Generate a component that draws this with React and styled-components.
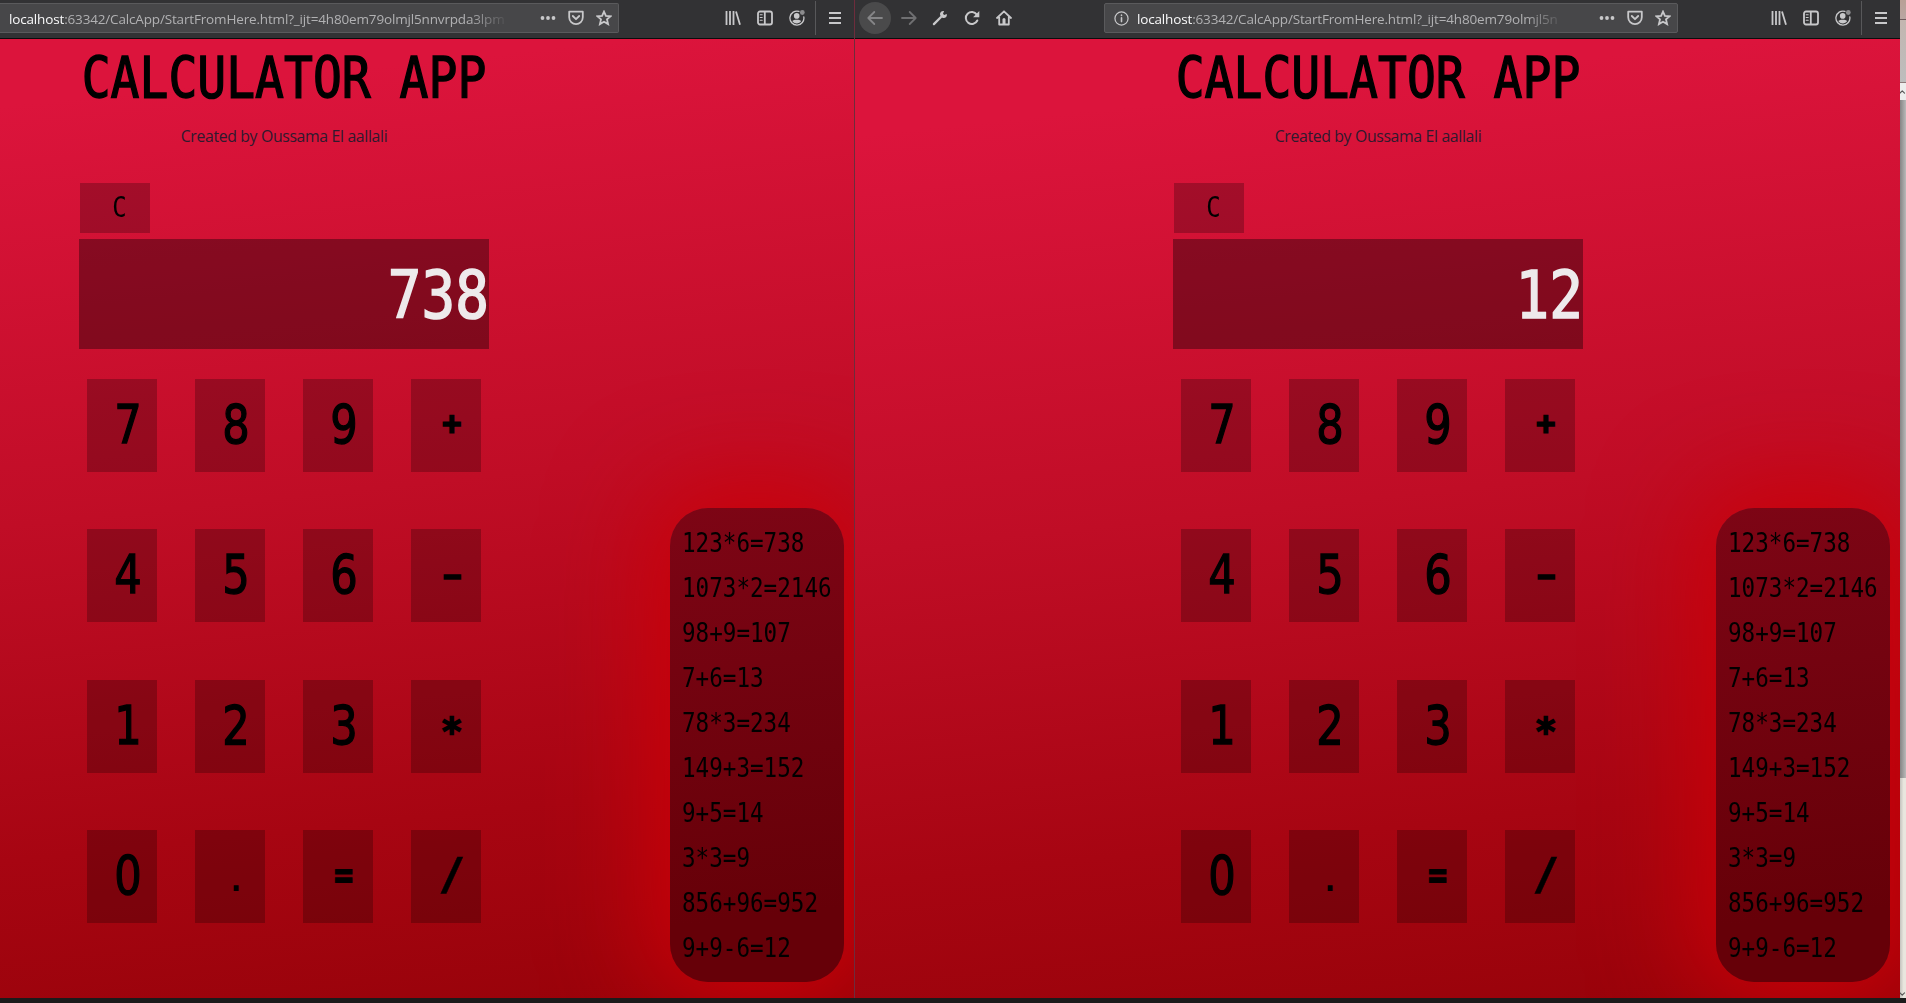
import React from "react";
import styled, { createGlobalStyle, css } from "styled-components";

const GlobalStyle = createGlobalStyle`
  * { box-sizing: border-box; }
  body { margin: 0; overflow: hidden; background: #1b1b1b; }
`;

const LCD = `"DejaVu Sans Mono", "Liberation Mono", monospace`;
const UI = `"Open Sans", "Noto Sans", sans-serif`;

const Desktop = styled.div`
  display: flex;
  width: 1906px;
  height: 1003px;
  padding-bottom: 5px;
  background: #1b1b1b;
  overflow: hidden;
`;

const Window = styled.section`
  display: flex;
  flex-direction: column;
  flex: none;
  width: ${(p) => p.$width}px;
  height: 998px;
  ${(p) => p.$divided && css`border-right: 1px solid #6e2c3c;`}
`;

const Toolbar = styled.header`
  display: flex;
  align-items: center;
  flex: none;
  height: 39px;
  padding-bottom: 2px;
  background: #323234;
  border-bottom: 1px solid #0c0c0d;
`;

const UrlBar = styled.div`
  display: flex;
  align-items: center;
  flex: none;
  width: ${(p) => p.$width}px;
  height: 30px;
  margin-left: ${(p) => p.$offset}px;
  background: #474749;
  border: 1px solid #5a5a5c;
  ${(p) => p.$cut && css`border-left: 0;`}
  border-radius: ${(p) => (p.$cut ? "0 2px 2px 0" : "2px")};
`;

const Url = styled.div`
  flex: none;
  width: ${(p) => p.$width}px;
  margin-left: ${(p) => p.$indent}px;
  padding-top: 1px;
  white-space: nowrap;
  font: 13.5px/22px ${UI};
  letter-spacing: -0.16px;
  color: #b1b1b3;
  mask-image: linear-gradient(to right, #000 calc(100% - 40px), transparent);
`;

const Host = styled.span`
  color: #f9f9fa;
`;

const IconSlot = styled.span`
  display: flex;
  flex: none;
  align-items: center;
  justify-content: center;
  width: ${(p) => p.$width || 28}px;
  height: 32px;
  color: #c8c8ca;
`;

const BackButton = styled(IconSlot)`
  background: #4a4a4b;
  border-radius: 50%;
  color: #858587;
`;

const Spacer = styled.span`
  flex: 1;
`;

const Separator = styled.span`
  width: 1px;
  height: 34px;
  margin: 0 3px 0 2px;
  background: #58585a;
`;

const MenuSlot = styled(IconSlot)`
  width: 35px;
  padding-right: 3px;
`;

const Page = styled.main`
  display: flex;
  justify-content: space-between;
  flex: 1;
  min-height: 0;
  padding-left: ${(p) => p.$indent}px;
  overflow: hidden;
  background-image: linear-gradient(174deg, #dc143c 0%, #dc143c 9%, #c00d26 48%, #a70512 79%, #950208 103%);
  background-size: ${(p) => p.$canvas}px 100%;
  background-position: right top;
`;

const Calculator = styled.div`
  display: flex;
  flex-direction: column;
  width: 410px;
`;

const Stretch = styled.span`
  display: inline-block;
  transform: scaleY(1.18);
`;

const Title = styled.h1`
  margin: 13px 0 0;
  height: 52px;
  text-align: center;
  white-space: nowrap;
  font: 48px/52px ${LCD};
  -webkit-text-stroke: 1.2px #000;
  color: #000;
`;

const Author = styled.p`
  margin: 20px 0 0;
  text-align: center;
  font: 15.8px/24px ${UI};
  letter-spacing: -0.34px;
  color: #2f1a2e;
`;

const Clear = styled.button`
  width: 70px;
  height: 50px;
  margin: 35px 0 0 1px;
  padding: 0 0 0 9px;
  border: 0;
  background: rgba(0, 0, 0, 0.24);
  font: 24px/50px ${LCD};
  color: #000;
`;

const Display = styled.output`
  height: 110px;
  margin-top: 6px;
  background: rgba(0, 0, 0, 0.36);
  text-align: right;
  font: 56px/111px ${LCD};
  -webkit-text-stroke: 1.4px #eeeaec;
  color: #eeeaec;
`;

const Keypad = styled.div`
  display: grid;
  grid-template-columns: repeat(4, 70px);
  grid-auto-rows: 93px;
  gap: 57.33px 38px;
  margin: 30px 0 0 8px;
`;

const Key = styled.button`
  padding: 0 0 2px 12px;
  border: 0;
  background: rgba(0, 0, 0, 0.24);
  font: 47px/91px "DejaVu Sans", sans-serif;
  color: #000;
`;

const KeyFace = styled.span`
  display: inline-block;
  transform: ${(p) => p.$shape};
  -webkit-text-stroke: ${(p) => p.$weight}px #000;
`;

const History = styled.ol`
  align-self: flex-end;
  width: 174px;
  height: 474px;
  margin: 0 10px 16px 0;
  padding: 13px 0 0 12px;
  list-style: none;
  background: linear-gradient(174deg, #7d0515, #660008 85%);
  border-radius: 38px;
  box-shadow: 0 0 100px 20px #cc0008;
`;

const Entry = styled.li`
  height: 45.05px;
  white-space: nowrap;
  font: 22.6px/45px ${LCD};
  color: #000;
`;

const Backdrop = styled.aside`
  display: flex;
  flex-direction: column;
  width: 6px;
  height: 998px;
  background: linear-gradient(to right, #c4c2bd, #e9e6de 60%);
`;

const Artwork = styled.div`
  height: 82px;
  background: linear-gradient(#b9a096, #b9a6a2 23%, #6e5a5c 23%, #6e5a5c 24.5%, #c3b6b0 25%, #bdbdbd);
`;

const ScrollUp = styled.div`
  display: flex;
  align-items: center;
  height: 18px;
  border-top: 1px solid #8d7a7a;
  background: #ededed;
`;

const Thumb = styled.div`
  height: 678px;
  background: linear-gradient(to right, #858585, #b9b9b9);
`;

const ScrollDown = styled.div`
  display: flex;
  align-items: flex-end;
  flex: 1;
`;

const Svg = ({ size = 16, children, ...rest }) => (
  <svg width={size} height={size} viewBox="0 0 16 16" fill="none" stroke="currentColor"
    strokeWidth="1.8" strokeLinecap="round" strokeLinejoin="round" {...rest}>
    {children}
  </svg>
);

const Dots = () => (
  <Svg fill="currentColor" stroke="none">
    <circle cx="2.500" cy="8" r="1.9" /><circle cx="8" cy="8" r="1.9" /><circle cx="13.500" cy="8" r="1.9" />
  </Svg>
);
const Pocket = () => (
  <Svg><path d="M1.2 1.7h13.6v5.6a6.8 6.8 0 0 1-13.6 0z" /><path d="M4.8 6l3.2 3.2L11.2 6" /></Svg>
);
const Star = () => (
  <Svg strokeLinejoin="miter"><path d="M8 1.600l1.900 4.300 4.700.4-3.600 3.100 1.100 4.700L8 11.700l-4.100 2.400 1.100-4.700-3.600-3.100 4.700-.4z" /></Svg>
);
const Library = () => (
  <Svg strokeLinecap="butt"><path d="M1.5 1v14M5 1v14M8.5 1v14M11 1.4l4 13.4" /></Svg>
);
const Sidebar = () => (
  <Svg><rect x="1" y="1.5" width="14" height="13" rx="2" /><path d="M7.8 2v12" /><path d="M3.2 4.7h2M3.2 7.5h2M3.2 10.2h2" strokeWidth="1.1" /></Svg>
);
const Account = () => (
  <Svg>
    <path d="M10 1.4A7 7 0 1 0 14.8 6.8" strokeWidth="1.3" />
    <circle cx="7.7" cy="5.9" r="2.8" fill="currentColor" stroke="none" />
    <path d="M3.3 11c1.5-1.7 7.300-1.700 8.800 0-1.500 3.200-7.300 3.200-8.800 0z" fill="currentColor" stroke="none" />
    <circle cx="13.3" cy="2.500" r="2.400" fill="#8b8b8d" stroke="none" />
  </Svg>
);
const Menu = () => (
  <Svg strokeLinecap="butt" strokeWidth="2"><path d="M2 3h12M2 8h12M2 13h12" /></Svg>
);
const Back = () => <Svg><path d="M15 8H1.500M7.300 2L1.300 8l6 6" /></Svg>;
const Forward = () => <Svg color="#6f6f71"><path d="M1 8h13.500M8.700 2l6 6-6 6" /></Svg>;
const Wrench = () => (
  <Svg>
    <path d="M1.900 14.100L9 7" strokeWidth="2.300" />
    <path d="M14.800 3.900l-2.700 1-1.100-1.100 1.100-2.700C9.400.7 7.500 2.700 8.100 5.300l2.600 2.600c2.600.6 4.600-1.300 4.100-4z" fill="currentColor" stroke="none" />
  </Svg>
);
const Reload = () => (
  <Svg strokeWidth="2"><path d="M13.300 10.500A6 6 0 1 1 12.800 4.600" /><path d="M15.300 1v6.200H9.100z" fill="currentColor" stroke="none" /></Svg>
);
const Home = () => (
  <Svg><path d="M1 8l7-6.700L15 8M3.200 7v7.500h9.600V7" /><path d="M8 14v-3.800" strokeWidth="3" strokeLinecap="butt" /><circle cx="8" cy="9.500" r="1.500" fill="currentColor" stroke="none" /></Svg>
);
const Info = () => (
  <Svg size={15} strokeWidth="1.300"><circle cx="8" cy="8" r="7" /><path d="M8 7.300v4M8 4.400v.4" strokeWidth="1.700" /></Svg>
);

const KEYS = ["7", "8", "9", "+", "4", "5", "6", "-", "1", "2", "3", "*", "0", ".", "=", "/"];
const DIGIT = { shape: "scale(0.92, 1.15)", weight: 1.2 };
const SHAPES = {
  "+": { shape: "translateY(-1px) scale(0.52)", weight: 6 },
  "-": { shape: "translateY(-2px) scale(1.3, 1.1)", weight: 1.2 },
  "*": { shape: "translateY(6px) scale(0.8)", weight: 3 },
  "=": { shape: "translateY(-1px) scale(0.55, 0.9)", weight: 2.4 },
  "/": { shape: "translateY(-1px) scale(1.4, 0.96)", weight: 0.3 },
  ".": { shape: "translateY(-1px)", weight: 0 },
};
const HISTORY = [
  "123*6=738", "1073*2=2146", "98+9=107", "7+6=13", "78*3=234",
  "149+3=152", "9+5=14", "3*3=9", "856+96=952", "9+9-6=12",
];

const PageActions = () => (
  <>
    <IconSlot><Dots /></IconSlot>
    <IconSlot><Pocket /></IconSlot>
    <IconSlot><Star /></IconSlot>
  </>
);

const BrowserActions = () => (
  <>
    <IconSlot $width={32}><Library /></IconSlot>
    <IconSlot $width={32}><Sidebar /></IconSlot>
    <IconSlot $width={32}><Account /></IconSlot>
    <Separator />
    <MenuSlot><Menu /></MenuSlot>
  </>
);

const Address = ({ tail, ...rest }) => (
  <Url {...rest}><Host>localhost</Host>:63342/CalcApp/StartFromHere.html?_ijt={tail}</Url>
);

const CalcPage = ({ value, indent, canvas }) => (
  <Page $indent={indent} $canvas={canvas}>
    <Calculator>
      <Title><Stretch>CALCULATOR APP</Stretch></Title>
      <Author>Created by Oussama El aallali</Author>
      <Clear><Stretch>C</Stretch></Clear>
      <Display><Stretch>{value}</Stretch></Display>
      <Keypad>
        {KEYS.map((k) => {
          const face = SHAPES[k] || DIGIT;
          return (
            <Key key={k}><KeyFace $shape={face.shape} $weight={face.weight}>{k}</KeyFace></Key>
          );
        })}
      </Keypad>
    </Calculator>
    <History>
      {HISTORY.map((h) => <Entry key={h}><Stretch>{h}</Stretch></Entry>)}
    </History>
  </Page>
);

export default function App() {
  return (
    <Desktop>
      <GlobalStyle />
      <Window $width={855} $divided>
        <Toolbar>
          <UrlBar $cut $width={619} $offset={0}>
            <Address tail="4h80em79olmjl5nnvrpda3lpm" $width={500} $indent={9} />
            <Spacer />
            <PageActions />
          </UrlBar>
          <Spacer />
          <BrowserActions />
        </Toolbar>
        <CalcPage value="738" indent={79} canvas={1140} />
      </Window>
      <Window $width={1045}>
        <Toolbar>
          <IconSlot $width={4} />
          <BackButton $width={32}><Back /></BackButton>
          <IconSlot $width={35}><Forward /></IconSlot>
          <IconSlot $width={28}><Wrench /></IconSlot>
          <IconSlot $width={35}><Reload /></IconSlot>
          <IconSlot $width={29}><Home /></IconSlot>
          <UrlBar $width={574} $offset={86}>
            <IconSlot $width={32}><Info /></IconSlot>
            <Address tail="4h80em79olmjl5n" $width={428} $indent={0} />
            <Spacer />
            <PageActions />
          </UrlBar>
          <Spacer />
          <BrowserActions />
        </Toolbar>
        <CalcPage value="12" indent={318} canvas={1045} />
      </Window>
      <Backdrop>
        <Artwork />
        <ScrollUp><Svg size={8} color="#555"><path d="M0 11l6-6 6 6" strokeWidth="3" /></Svg></ScrollUp>
        <Thumb />
        <ScrollDown><Svg size={8} color="#555"><path d="M0 5l6 6 6-6" strokeWidth="3" /></Svg></ScrollDown>
      </Backdrop>
    </Desktop>
  );
}
